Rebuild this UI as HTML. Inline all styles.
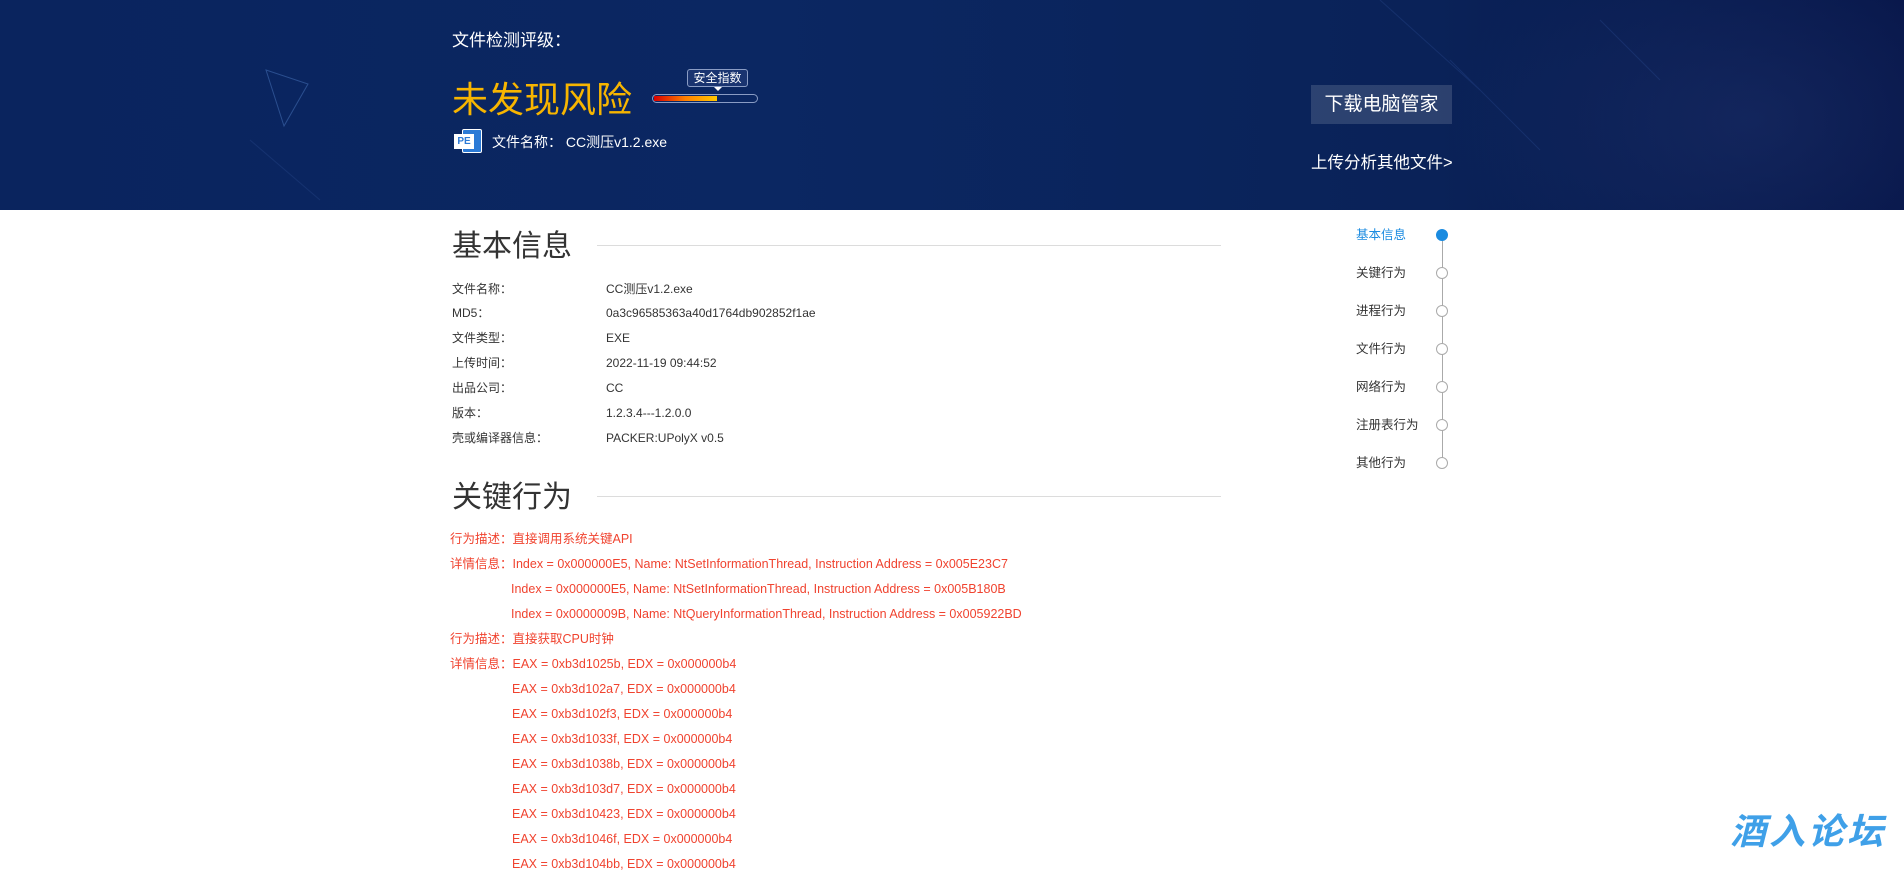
<!DOCTYPE html><html><head><meta charset="utf-8"><style>
*{margin:0;padding:0;box-sizing:border-box}
body{width:1904px;height:873px;overflow:hidden;background:#fff;font-family:"Liberation Sans","Noto Sans CJK SC",sans-serif;position:relative}
.ab{position:absolute;white-space:nowrap}
.banner{position:absolute;left:0;top:0;width:1904px;height:210px;background:linear-gradient(90deg,#0a245e 0%,#0b2762 40%,#0a2258 75%,#061548 100%);overflow:hidden}
.h{font-size:30px;color:#333;line-height:30px}
.line{position:absolute;height:1px;background:#dcdcdc}
.lb{font-size:12px;color:#333;line-height:14px}
.r{font-size:12.5px;color:#f0432f;line-height:14px}
.tl{font-size:12.5px;color:#333;line-height:14px}
.dot{position:absolute;width:12px;height:12px;border:1px solid #aaa;border-radius:50%;background:#fff}
</style></head><body>
<div class="banner">
<div class="ab" style="left:0;top:0;width:1904px;height:210px;background:radial-gradient(ellipse 300px 200px at 1750px 120px,rgba(40,60,120,.35),transparent)"></div>
<svg class="ab" style="left:0;top:0" width="1904" height="210"><g stroke="#2a4a90" stroke-width="1" opacity=".35"><line x1="1380" y1="0" x2="1480" y2="90"/><line x1="1450" y1="60" x2="1540" y2="150"/><line x1="1600" y1="20" x2="1660" y2="80"/><line x1="250" y1="140" x2="320" y2="200"/></g><g stroke="#4a78c0" fill="none" stroke-width="1" opacity=".5"><path d="M266 70 L308 84 L284 126 Z M266 70 L284 126"/></g></svg>
<div class="ab" style="left:452px;top:26px;font-size:17px;color:#fff">文件检测评级：</div>
<div class="ab" style="left:452px;top:80px;font-size:36px;color:#f7b500;line-height:40px">未发现风险</div>
<div class="ab" style="left:687px;top:69px;width:61px;height:18px;border:1px solid #8a9cc4;border-radius:3px;background:#1a3470;color:#fff;font-size:12px;line-height:16px;text-align:center">安全指数</div>
<div class="ab" style="left:714px;top:87px;width:0;height:0;border-left:4px solid transparent;border-right:4px solid transparent;border-top:4px solid #fff"></div>
<div class="ab" style="left:652px;top:94px;width:106px;height:9px;border:1px solid #8a9cc4;border-radius:5px;padding:1px"><div style="width:62%;height:5px;background:linear-gradient(90deg,#d80000,#ff8000,#ffc800)"></div></div>
<div class="ab" style="left:454px;top:129px;width:32px;height:24px"><div style="position:absolute;left:8px;top:0;width:20px;height:24px;background:#2b7ad6;border:1px solid #fff;border-radius:2px"></div><div style="position:absolute;left:0;top:5px;width:20px;height:15px;background:#fff;color:#2b7ad6;font-size:10px;font-weight:bold;line-height:15px;text-align:center">PE</div></div>
<div class="ab" style="left:492px;top:132px;font-size:14px;color:#fff">文件名称： CC测压v1.2.exe</div>
<div class="ab" style="left:1311px;top:85px;width:141px;height:39px;background:rgba(255,255,255,.14);color:#fff;font-size:19px;line-height:39px;text-align:center">下载电脑管家</div>
<div class="ab" style="left:1311px;top:149px;font-size:16.5px;color:#fff">上传分析其他文件&gt;</div>
</div>

<div class="ab h" style="left:452px;top:232px">基本信息</div>
<div class="line" style="left:597px;top:245px;width:624px"></div>
<div class="ab lb" style="left:452px;top:282px">文件名称：</div><div class="ab lb" style="left:606px;top:282px">CC测压v1.2.exe</div>
<div class="ab lb" style="left:452px;top:306px">MD5：</div><div class="ab lb" style="left:606px;top:306px">0a3c96585363a40d1764db902852f1ae</div>
<div class="ab lb" style="left:452px;top:331px">文件类型：</div><div class="ab lb" style="left:606px;top:331px">EXE</div>
<div class="ab lb" style="left:452px;top:356px">上传时间：</div><div class="ab lb" style="left:606px;top:356px">2022-11-19 09:44:52</div>
<div class="ab lb" style="left:452px;top:381px">出品公司：</div><div class="ab lb" style="left:606px;top:381px">CC</div>
<div class="ab lb" style="left:452px;top:406px">版本：</div><div class="ab lb" style="left:606px;top:406px">1.2.3.4---1.2.0.0</div>
<div class="ab lb" style="left:452px;top:431px">壳或编译器信息：</div><div class="ab lb" style="left:606px;top:431px">PACKER:UPolyX v0.5</div>

<div class="ab h" style="left:452px;top:483px">关键行为</div>
<div class="line" style="left:597px;top:496px;width:624px"></div>
<div class="ab r" style="left:450px;top:532px">行为描述：直接调用系统关键API</div>
<div class="ab r" style="left:450px;top:557px">详情信息：Index = 0x000000E5, Name: NtSetInformationThread, Instruction Address = 0x005E23C7</div>
<div class="ab r" style="left:511px;top:582px">Index = 0x000000E5, Name: NtSetInformationThread, Instruction Address = 0x005B180B</div>
<div class="ab r" style="left:511px;top:607px">Index = 0x0000009B, Name: NtQueryInformationThread, Instruction Address = 0x005922BD</div>
<div class="ab r" style="left:450px;top:632px">行为描述：直接获取CPU时钟</div>
<div class="ab r" style="left:450px;top:657px">详情信息：EAX = 0xb3d1025b, EDX = 0x000000b4</div>
<div class="ab r" style="left:512px;top:682px">EAX = 0xb3d102a7, EDX = 0x000000b4</div>
<div class="ab r" style="left:512px;top:707px">EAX = 0xb3d102f3, EDX = 0x000000b4</div>
<div class="ab r" style="left:512px;top:732px">EAX = 0xb3d1033f, EDX = 0x000000b4</div>
<div class="ab r" style="left:512px;top:757px">EAX = 0xb3d1038b, EDX = 0x000000b4</div>
<div class="ab r" style="left:512px;top:782px">EAX = 0xb3d103d7, EDX = 0x000000b4</div>
<div class="ab r" style="left:512px;top:807px">EAX = 0xb3d10423, EDX = 0x000000b4</div>
<div class="ab r" style="left:512px;top:832px">EAX = 0xb3d1046f, EDX = 0x000000b4</div>
<div class="ab r" style="left:512px;top:857px">EAX = 0xb3d104bb, EDX = 0x000000b4</div>

<div class="ab" style="left:1442px;top:235px;width:1px;height:228px;background:#aaa"></div>
<div class="dot" style="left:1436px;top:229px;background:#1a8be0;border-color:#1a8be0"></div>
<div class="dot" style="left:1436px;top:267px"></div>
<div class="dot" style="left:1436px;top:305px"></div>
<div class="dot" style="left:1436px;top:343px"></div>
<div class="dot" style="left:1436px;top:381px"></div>
<div class="dot" style="left:1436px;top:419px"></div>
<div class="dot" style="left:1436px;top:457px"></div>
<div class="ab tl" style="left:1356px;top:228px;color:#1a8be0">基本信息</div>
<div class="ab tl" style="left:1356px;top:266px">关键行为</div>
<div class="ab tl" style="left:1356px;top:304px">进程行为</div>
<div class="ab tl" style="left:1356px;top:342px">文件行为</div>
<div class="ab tl" style="left:1356px;top:380px">网络行为</div>
<div class="ab tl" style="left:1356px;top:418px">注册表行为</div>
<div class="ab tl" style="left:1356px;top:456px">其他行为</div>

<div class="ab" style="left:1730px;top:812px;font-size:36px;line-height:40px;font-weight:bold;font-style:italic;color:#3fa0e8;letter-spacing:3px">酒入论坛</div>
</body></html>
